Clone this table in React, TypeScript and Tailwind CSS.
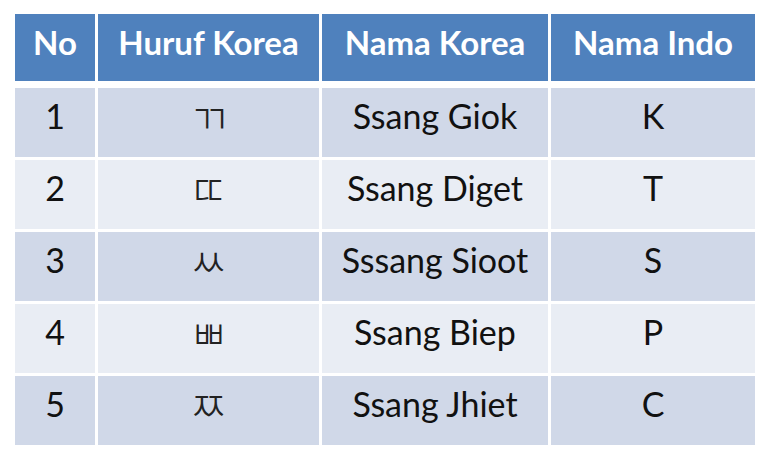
export default function App() {
  const rows = [
    { no: "1", huruf: "ㄲ", korea: "Ssang Giok", indo: "K" },
    { no: "2", huruf: "ㄸ", korea: "Ssang Diget", indo: "T" },
    { no: "3", huruf: "ㅆ", korea: "Sssang Sioot", indo: "S" },
    { no: "4", huruf: "ㅃ", korea: "Ssang Biep", indo: "P" },
    { no: "5", huruf: "ㅉ", korea: "Ssang Jhiet", indo: "C" },
  ]

  const cols = "grid grid-cols-[80px_221px_226px_204px] gap-x-[3px]"

  return (
    <div className="w-[768px] h-[461px] bg-white pt-[14px] pl-[15px] font-['Lato','Noto_Sans_CJK_KR',sans-serif]">
      <div className={`${cols} h-[67px] mb-[7px]`}>
        {["No", "Huruf Korea", "Nama Korea", "Nama Indo"].map((h) => (
          <div key={h} className="bg-[#4f81bd] flex items-center justify-center pb-[10px] text-white font-bold text-[33px]">
            {h}
          </div>
        ))}
      </div>
      <div className="flex flex-col gap-y-[3px]">
        {rows.map((r, i) => (
          <div key={r.no} className={`${cols} h-[69px] text-[34px] text-[#111]`}>
            {[r.no, r.huruf, r.korea, r.indo].map((v, j) => (
              <div
                key={j}
                className={`flex items-center justify-center pb-[14px] ${i % 2 === 0 ? "bg-[#d0d8e8]" : "bg-[#e9edf4]"}`}
              >
                {j === 1 ? (
                  <span className="font-['Noto_Sans_CJK_KR',sans-serif] font-light text-[42px] leading-none text-[#222]">{v}</span>
                ) : (
                  v
                )}
              </div>
            ))}
          </div>
        ))}
      </div>
    </div>
  )
}
